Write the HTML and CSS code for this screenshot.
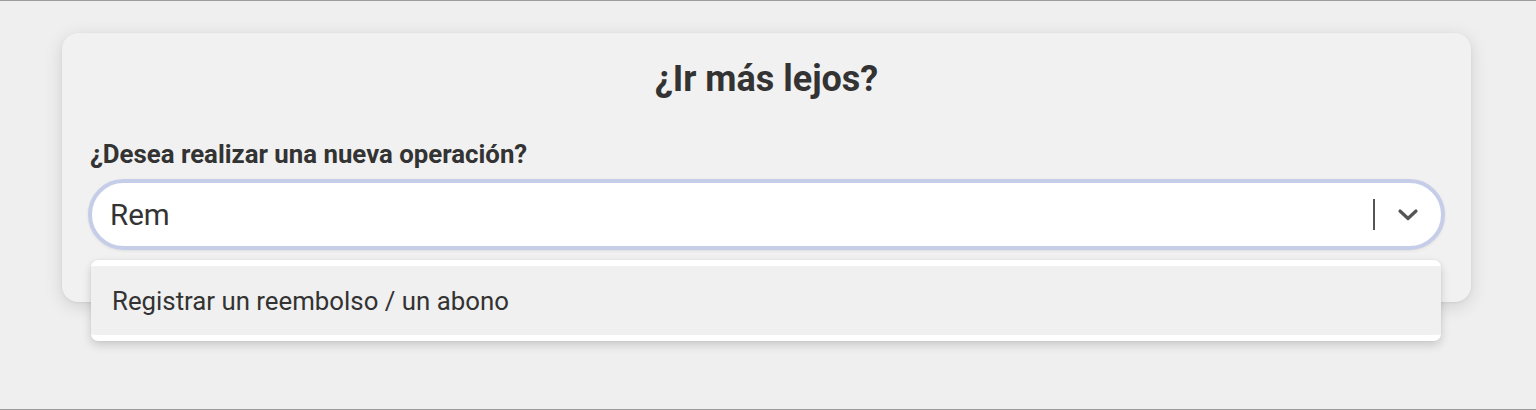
FILE: index.html
```html
<!DOCTYPE html>
<html lang="es">
<head>
<meta charset="utf-8">
<title>¿Ir más lejos?</title>
<link rel="stylesheet" href="styles.css">
</head>
<body>
<div class="page">
  <section class="card">
    <h2 class="card-title">¿Ir más lejos?</h2>
    <label class="field-label" for="op">¿Desea realizar una nueva operación?</label>
    <div class="combo">
      <div class="combo-control">
        <input id="op" class="combo-input" type="text" value="Rem">
        <span class="combo-sep"></span>
        <span class="combo-arrow">
          <svg width="22" height="14" viewBox="0 0 22 14"><path d="M3 3 L11 10.5 L19 3" fill="none" stroke="#555" stroke-width="3.2" stroke-linecap="round" stroke-linejoin="round"/></svg>
        </span>
      </div>
      <div class="combo-menu">
        <div class="combo-option">Registrar un reembolso / un abono</div>
      </div>
    </div>
  </section>
</div>
</body>
</html>
```
FILE: styles.css
```css
html, body {
  margin: 0;
  padding: 0;
}
body {
  background: #efefef;
  font-family: Roboto, "Liberation Sans", sans-serif;
  color: #333;
}
.page {
  box-sizing: border-box;
  height: 410px;
  border-top: 1px solid #9c9c9c;
  border-bottom: 1px solid #9c9c9c;
  padding: 32px 65px 0 62px;
}
.card {
  box-sizing: border-box;
  width: 1409px;
  height: 269px;
  background: #f1f1f1;
  border-radius: 16px;
  box-shadow: 0 4px 18px rgba(0, 0, 0, 0.13), 0 1px 3px rgba(0, 0, 0, 0.06);
  padding: 27px 26px 0 26px;
  display: flex;
  flex-direction: column;
}
.card-title {
  margin: 0;
  font-size: 36px;
  line-height: 38px;
  font-weight: 700;
  text-align: center;
  color: #333;
}
.field-label {
  margin: 43px 0 0 2px;
  font-size: 25.8px;
  line-height: 27px;
  font-weight: 700;
  color: #333;
}
.combo {
  position: relative;
  margin-top: 11px;
}
.combo-control {
  box-sizing: border-box;
  height: 71px;
  background: #fff;
  border: 4px solid #c6cde8;
  border-radius: 36px;
  display: flex;
  align-items: center;
  padding: 0 22px 0 18px;
  box-shadow: 0 1px 3px rgba(0, 0, 0, 0.08);
}
.combo-input {
  flex: 1;
  border: 0;
  outline: none;
  background: transparent;
  font-family: Roboto, "Liberation Sans", sans-serif;
  font-size: 29.5px;
  color: #333;
  padding: 0;
}
.combo-sep {
  width: 2px;
  height: 31px;
  background: #555;
  margin-right: 22px;
}
.combo-arrow {
  display: flex;
  align-items: center;
}
.combo-menu {
  position: absolute;
  top: 81px;
  left: 3px;
  width: 1350px;
  box-sizing: border-box;
  background: #f0f0f0;
  border-top: 6px solid #fff;
  border-bottom: 6px solid #fff;
  border-radius: 7px;
  box-shadow: 0 4px 10px rgba(0, 0, 0, 0.16), 0 0 2px rgba(0, 0, 0, 0.08);
}
.combo-option {
  height: 69px;
  display: flex;
  align-items: center;
  padding-left: 21px;
  font-size: 25.8px;
  color: #333;
}
```
